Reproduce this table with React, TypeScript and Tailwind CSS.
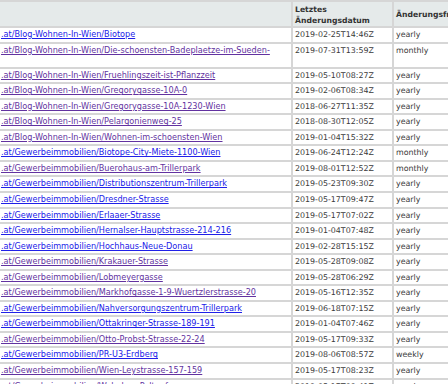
import React from "react";

type Row = { path: string; date: string; freq: string; visited: boolean; wrap?: boolean };

const rows: Row[] = [
  { path: ".at/Blog-Wohnen-In-Wien/Biotope", date: "2019-02-25T14:46Z", freq: "yearly", visited: false },
  { path: ".at/Blog-Wohnen-In-Wien/Die-schoensten-Badeplaetze-im-Sueden-", date: "2019-07-31T13:59Z", freq: "monthly", visited: true, wrap: true },
  { path: ".at/Blog-Wohnen-In-Wien/Fruehlingszeit-ist-Pflanzzeit", date: "2019-05-10T08:27Z", freq: "yearly", visited: true },
  { path: ".at/Blog-Wohnen-In-Wien/Gregorygasse-10A-0", date: "2019-02-06T08:34Z", freq: "yearly", visited: true },
  { path: ".at/Blog-Wohnen-In-Wien/Gregorygasse-10A-1230-Wien", date: "2018-06-27T11:35Z", freq: "yearly", visited: true },
  { path: ".at/Blog-Wohnen-In-Wien/Pelargonienweg-25", date: "2018-08-30T12:05Z", freq: "yearly", visited: true },
  { path: ".at/Blog-Wohnen-In-Wien/Wohnen-im-schoensten-Wien", date: "2019-01-04T15:32Z", freq: "yearly", visited: true },
  { path: ".at/Gewerbeimmobilien/Biotope-City-Miete-1100-Wien", date: "2019-06-24T12:24Z", freq: "monthly", visited: false },
  { path: ".at/Gewerbeimmobilien/Buerohaus-am-Trillerpark", date: "2019-08-01T12:52Z", freq: "monthly", visited: true },
  { path: ".at/Gewerbeimmobilien/Distributionszentrum-Trillerpark", date: "2019-05-23T09:30Z", freq: "yearly", visited: false },
  { path: ".at/Gewerbeimmobilien/Dresdner-Strasse", date: "2019-05-17T09:47Z", freq: "yearly", visited: false },
  { path: ".at/Gewerbeimmobilien/Erlaaer-Strasse", date: "2019-05-17T07:02Z", freq: "yearly", visited: false },
  { path: ".at/Gewerbeimmobilien/Hernalser-Hauptstrasse-214-216", date: "2019-01-04T07:48Z", freq: "yearly", visited: false },
  { path: ".at/Gewerbeimmobilien/Hochhaus-Neue-Donau", date: "2019-02-28T15:15Z", freq: "yearly", visited: false },
  { path: ".at/Gewerbeimmobilien/Krakauer-Strasse", date: "2019-05-28T09:08Z", freq: "yearly", visited: true },
  { path: ".at/Gewerbeimmobilien/Lobmeyergasse", date: "2019-05-28T06:29Z", freq: "yearly", visited: true },
  { path: ".at/Gewerbeimmobilien/Markhofgasse-1-9-Wuertzlerstrasse-20", date: "2019-05-16T12:35Z", freq: "yearly", visited: true },
  { path: ".at/Gewerbeimmobilien/Nahversorgungszentrum-Trillerpark", date: "2019-06-18T07:15Z", freq: "yearly", visited: false },
  { path: ".at/Gewerbeimmobilien/Ottakringer-Strasse-189-191", date: "2019-01-04T07:46Z", freq: "yearly", visited: false },
  { path: ".at/Gewerbeimmobilien/Otto-Probst-Strasse-22-24", date: "2019-05-17T09:33Z", freq: "yearly", visited: true },
  { path: ".at/Gewerbeimmobilien/PR-U3-Erdberg", date: "2019-08-06T08:57Z", freq: "weekly", visited: false },
  { path: ".at/Gewerbeimmobilien/Wien-Leystrasse-157-159", date: "2019-05-17T08:23Z", freq: "yearly", visited: true },
  { path: ".at/Gewerbeimmobilien/Wohnbau-Paltaufgasse", date: "2019-05-17T09:41Z", freq: "yearly", visited: true },
];

export default function App() {
  return (
    <div
      className="w-[448px] h-[384px] overflow-hidden bg-white"
      style={{ fontFamily: '"DejaVu Sans", Verdana, sans-serif' }}
    >
      <table className="table-fixed border-separate border-spacing-[2px] bg-[#d6d6d6] w-[528px] -ml-[12px] mt-0 text-[7.9px] leading-[9.55px]">
        <thead>
          <tr className="h-[24px]">
            <th className="w-[301px] bg-[#e5eaea] p-0"></th>
            <th className="w-[99px] bg-[#e5eaea] pl-[2px] pt-[1px] align-middle text-left font-bold text-[#333] text-[7.7px] leading-[11px]">
              Letztes<br />Änderungsdatum
            </th>
            <th className="w-[120px] bg-[#e5eaea] pl-[2px] pt-[1px] align-middle text-left font-bold text-[#333] text-[7.7px] leading-[11px] whitespace-nowrap">
              Änderungsfrequenz
            </th>
          </tr>
        </thead>
        <tbody>
          {rows.map((r, i) => (
            <tr key={i}>
              <td className="bg-white pl-[11px] py-[2px] align-top whitespace-nowrap overflow-hidden text-[8.15px]">
                <a
                  href="#"
                  className={
                    "underline " + (r.visited ? "text-[#6232a0]" : "text-[#2020e8]")
                  }
                >
                  {r.path}
                </a>
                {r.wrap ? (
                  <>
                    <br />
                    <span>&nbsp;</span>
                  </>
                ) : null}
              </td>
              <td className="bg-white pl-[2px] py-[2px] align-top text-[#3a3a3a] whitespace-nowrap">
                {r.date}
              </td>
              <td className="bg-white pl-[2px] py-[2px] align-top text-[#3a3a3a] whitespace-nowrap">
                {r.freq}
              </td>
            </tr>
          ))}
        </tbody>
      </table>
    </div>
  );
}
